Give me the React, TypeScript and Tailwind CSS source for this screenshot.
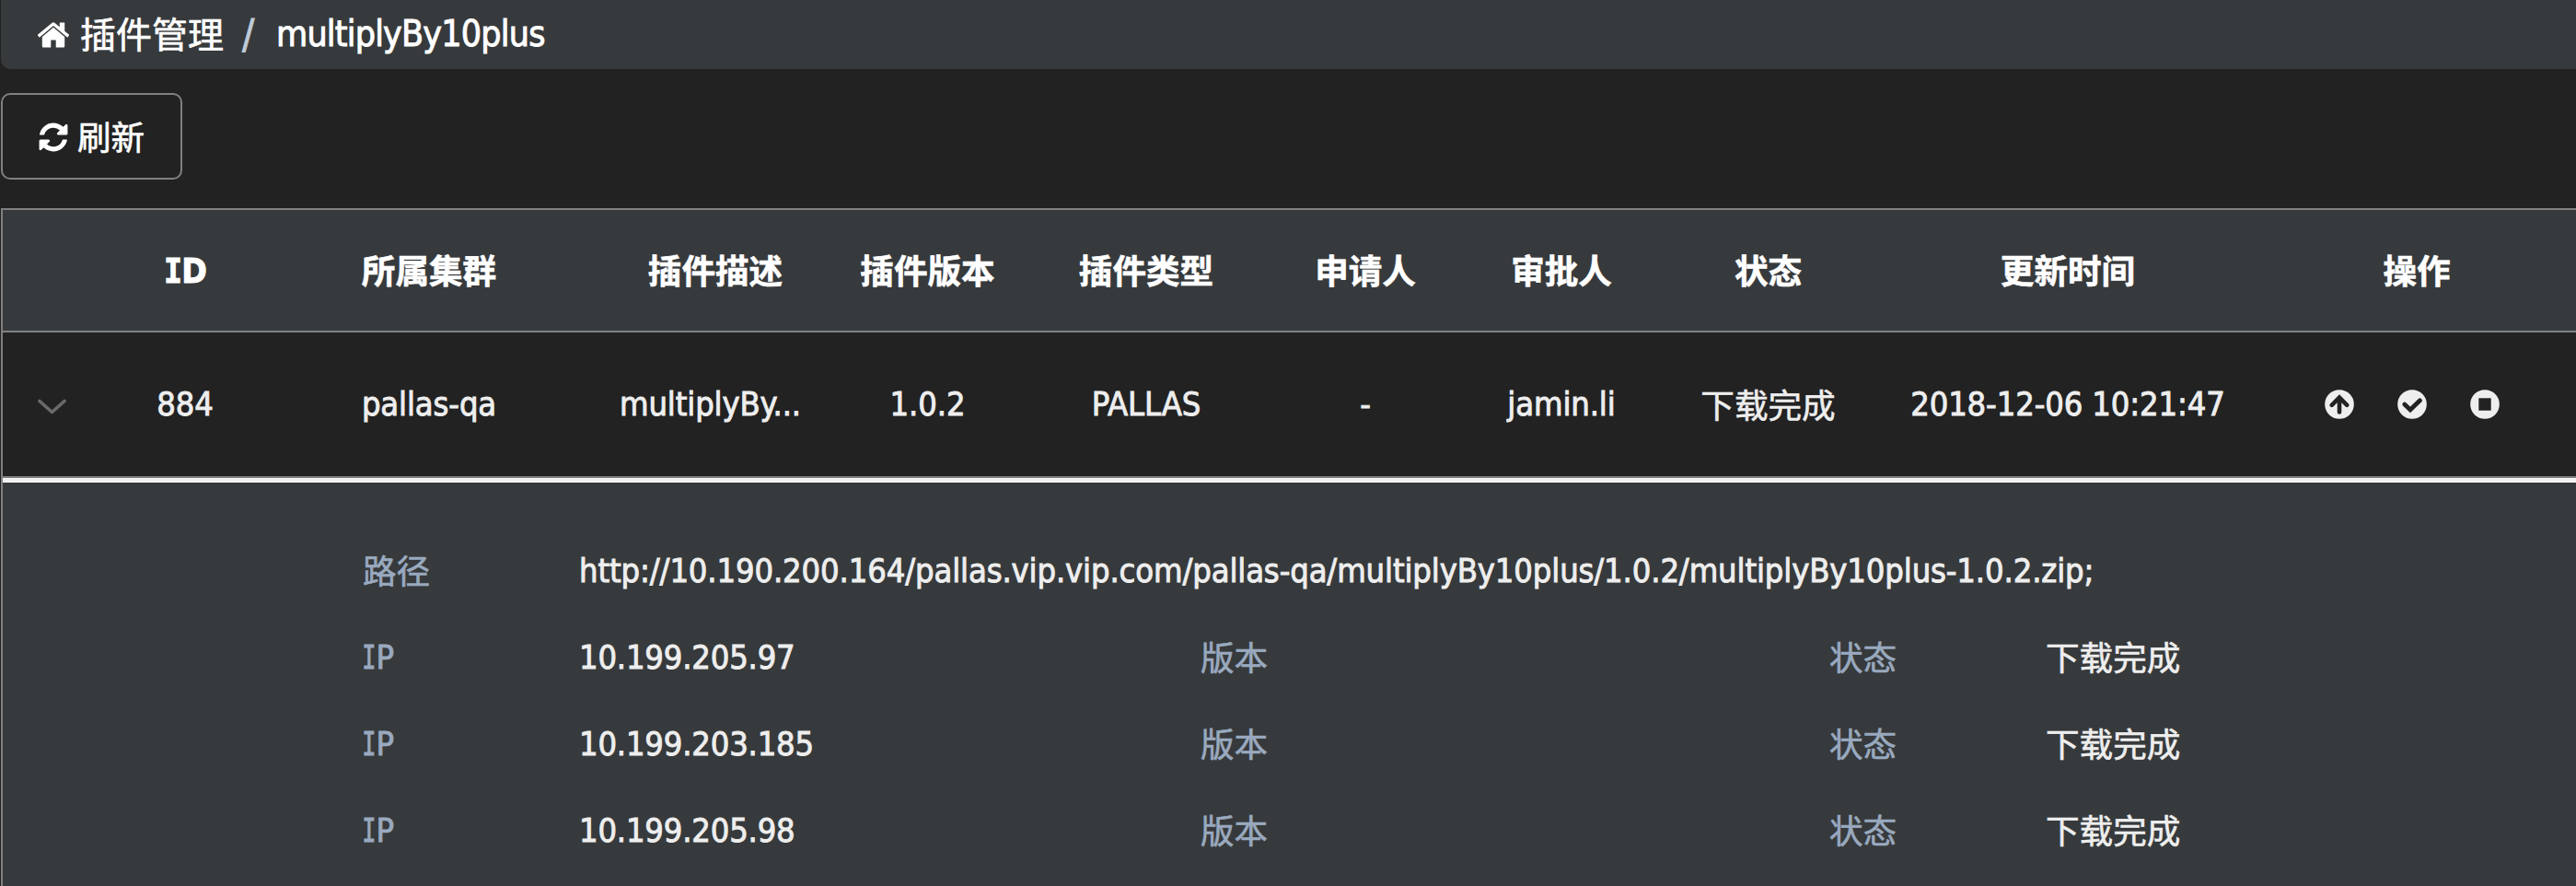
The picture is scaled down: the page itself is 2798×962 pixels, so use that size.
import React from "react";

const LATIN =
  "font-['DejaVu_Sans_Condensed','DejaVu_Sans','Noto_Sans_CJK_SC',sans-serif] [-webkit-text-stroke:0.9px]";
const CJK = "font-['Noto_Sans_CJK_SC',sans-serif]";

function Latin({ children, className = "text-[36px] tracking-[-0.12px]" }: { children: React.ReactNode; className?: string }) {
  return <span className={`${LATIN} whitespace-nowrap ${className}`}>{children}</span>;
}

function Han({ children, className = "" }: { children: React.ReactNode; className?: string }) {
  return <span className={`whitespace-nowrap ${className}`}>{children}</span>;
}

function SerifI({ className }: { className: string }) {
  return <span className={`inline-block font-['DejaVu_Sans_Mono',monospace] ${className}`}>I</span>;
}

const HomeIcon = () => (
  <svg viewBox="0 0 1792 1792" className="h-[38px] w-[38px]" fill="currentColor">
    <path d="M1472 992v480q0 26-19 45t-45 19h-384v-384h-256v384h-384q-26 0-45-19t-19-45v-480q0-1 .5-3t.5-3l575-474 575 474q1 2 1 6zm223-69l-62 74q-8 9-21 11h-3q-13 0-21-7l-692-577-692 577q-12 8-24 7-13-2-21-11l-62-74q-8-10-7-23.5t11-21.5l719-599q32-26 76-26t76 26l244 204v-195q0-14 9-23t23-9h192q14 0 23 9t9 23v408l219 182q10 8 11 21.5t-7 23.5z" />
  </svg>
);

const RefreshIcon = () => (
  <svg viewBox="0 0 1792 1792" className="mt-px h-9 w-9" fill="currentColor">
    <path d="M1639 1056q0 5-1 7-64 268-268 434.5t-478 166.5q-146 0-282.5-55t-243.5-157l-129 129q-19 19-45 19t-45-19-19-45v-448q0-26 19-45t45-19h448q26 0 45 19t19 45-19 45l-137 137q71 66 161 102t187 36q134 0 250-65t186-179q11-17 53-117 8-23 30-23h192q13 0 22.5 9.5t9.5 22.5zm25-800v448q0 26-19 45t-45 19h-448q-26 0-45-19t-19-45 19-45l138-138q-148-137-349-137-134 0-250 65t-186 179q-11 17-53 117-8 23-30 23h-199q-13 0-22.5-9.5t-9.5-22.5v-7q65-268 270-434.5t480-166.5q146 0 284 55.5t245 156.5l130-129q19-19 45-19t45 19 19 45z" />
  </svg>
);

function RoundIcon({ children }: { children: React.ReactNode }) {
  return (
    <svg viewBox="0 0 32 32" className="h-8 w-8">
      <circle cx="16" cy="16" r="15.8" fill="#eeeeee" />
      {children}
    </svg>
  );
}

const COLS =
  "grid grid-cols-[108px_180px_350px_272px_189px_286px_190px_236px_213px_438px_320px_1fr] items-center text-center";

const HEADERS = ["所属集群", "插件描述", "插件版本", "插件类型", "申请人", "审批人", "状态", "更新时间", "操作"];
const NODES = ["10.199.205.97", "10.199.203.185", "10.199.205.98"];

const DETAIL = "grid h-[94px] grid-cols-[235px_675px_683px_235px_1fr] items-center";
const LABEL = "-mt-[2px] text-[#99a9bf]";

export default function App() {
  return (
    <div
      className={`h-[962px] w-[2798px] overflow-hidden bg-[#222222] pl-px text-[36.6px] leading-none text-[#eeeeee] [-webkit-text-stroke:0.6px] ${CJK}`}
    >
      <header className="flex h-[75px] items-center rounded-bl-[10px] bg-[#373a3c] pl-[38px] text-[39px] text-white">
        <HomeIcon />
        <Han className="-mt-[5px] ml-[10px]">插件管理</Han>
        <Latin className="ml-[20px] w-[18px] text-[44px] text-[#bfcbd9]">/</Latin>
        <Latin className="-mt-[3px] ml-[19px] text-[39px] tracking-[-0.8px]">multiplyBy10plus</Latin>
      </header>

      <button className="mt-[26px] flex h-[94px] w-[197px] items-center rounded-[10px] border-2 border-[#808080] pl-[37px] text-white">
        <RefreshIcon />
        <Han className="ml-[8px]">刷新</Han>
      </button>

      <section className="mt-[31px] border-t-2 border-l-2 border-[#808080]">
        <div className={`${COLS} h-[133px] border-b-2 border-[#808080] bg-[#373a3c] font-bold text-white`}>
          <span />
          <Latin className="mt-[2px] pl-[2px] text-[37px] tracking-[-0.14px]">
            <SerifI className="-mx-[2px] scale-x-[0.9]" />D
          </Latin>
          {HEADERS.map((h) => (
            <Han key={h}>{h}</Han>
          ))}
        </div>

        <div className={`${COLS} h-[158px] border-b-2 border-[#808080]`}>
          <svg viewBox="0 0 32 18" className="mx-auto mt-[6px] h-[18px] w-8" fill="none">
            <path d="M2 2.5 15.5 14.5 29 2.5" stroke="#6b6b6b" strokeWidth="3.6" strokeLinecap="round" strokeLinejoin="round" />
          </svg>
          <Latin>884</Latin>
          <Latin>pallas-qa</Latin>
          <Latin className="pr-[11px] text-[36px] tracking-[-0.12px]">multiplyBy...</Latin>
          <Latin>1.0.2</Latin>
          <Latin>PALLAS</Latin>
          <Latin>-</Latin>
          <Latin>jamin.li</Latin>
          <Han>下载完成</Han>
          <Latin>2018-12-06 10:21:47</Latin>
          <span className="flex justify-center gap-[47px] pr-[11px]">
            <RoundIcon>
              <path d="M16 24.5V9.5M7.8 16.8 16 8.6 24.2 16.8" fill="none" stroke="#222222" strokeWidth="4.6" strokeLinecap="round" strokeLinejoin="miter" />
            </RoundIcon>
            <RoundIcon>
              <path d="M7.8 16 14 22 24.5 11.8" fill="none" stroke="#222222" strokeWidth="4.8" strokeLinecap="round" strokeLinejoin="miter" />
            </RoundIcon>
            <RoundIcon>
              <rect x="9.3" y="9.3" width="13.4" height="13.4" fill="#222222" />
            </RoundIcon>
          </span>
        </div>

        <div className="h-[443px] border-t-[5px] border-[#f2f2f2] bg-[#373a3c] pt-[49px] pl-[391px]">
          <div className={DETAIL}>
            <Han className={LABEL}>路径</Han>
            <Latin>http://10.190.200.164/pallas.vip.vip.com/pallas-qa/multiplyBy10plus/1.0.2/multiplyBy10plus-1.0.2.zip;</Latin>
          </div>
          {NODES.map((ip) => (
            <div key={ip} className={DETAIL}>
              <Latin className="text-[36px] tracking-[-0.14px] text-[#99a9bf]">
                <SerifI className="-mr-[3px] -ml-[4px] scale-x-[0.7]" />P
              </Latin>
              <Latin className="text-[36px] tracking-[-0.18px]">{ip}</Latin>
              <Han className={LABEL}>版本</Han>
              <Han className={LABEL}>状态</Han>
              <Han className="-mt-[2px]">下载完成</Han>
            </div>
          ))}
        </div>
      </section>
    </div>
  );
}
